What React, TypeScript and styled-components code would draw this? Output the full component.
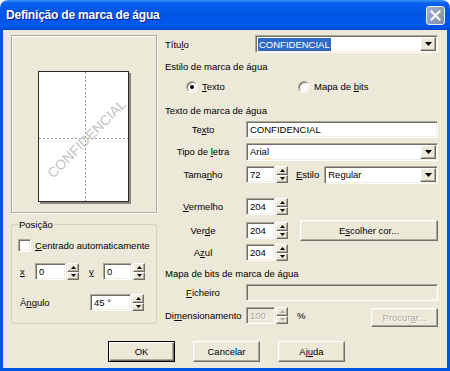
import React from "react";
import styled, { createGlobalStyle, css } from "styled-components";

const C = {
  face: "#ECE9D8",
  light: "#F1EFE2",
  hi: "#FFFFFF",
  shadow: "#ACA899",
  dk: "#716F64",
  blue: "#0054E3",
};

const Global = createGlobalStyle`
  html, body { margin: 0; padding: 0; background: #fff; }
  body { font-family: "Liberation Sans", Arial, sans-serif; }
  #root { width: 450px; height: 371px; }
  * { box-sizing: border-box; }
`;

const sunken = css`
  border: 1px solid;
  border-color: ${C.shadow} ${C.hi} ${C.hi} ${C.shadow};
  box-shadow: inset 1px 1px ${C.dk}, inset -1px -1px ${C.light};
`;

const raised = css`
  border: 1px solid;
  border-color: ${C.hi} ${C.dk} ${C.dk} ${C.hi};
  box-shadow: inset -1px -1px ${C.shadow}, inset 1px 1px ${C.light};
`;

const disabledText = css`
  color: ${C.shadow};
  text-shadow: 1px 1px ${C.hi};
`;

const Window = styled.div`
  width: 450px;
  height: 371px;
  display: flex;
  flex-direction: column;
  border-radius: 8px 8px 0 0;
  overflow: hidden;
  font-size: 9.5px;
  line-height: 13px;
  color: #000;
`;

const TitleBar = styled.div`
  height: 30px;
  flex: none;
  display: flex;
  align-items: center;
  justify-content: space-between;
  padding: 0 5px 0 6px;
  background: linear-gradient(
    180deg,
    #3d95ff 0%,
    #0a5fee 10%,
    #0054e3 45%,
    #0058ee 85%,
    #0050e0 94%,
    #0043cf 100%
  );
`;

const TitleText = styled.span`
  color: #fff;
  font-weight: bold;
  font-size: 12px;
  letter-spacing: -0.2px;
  text-shadow: 1px 1px #0a1d8a;
`;

const CloseBtn = styled.div`
  width: 19px;
  height: 19px;
  border: 1px solid #e8ecf4;
  border-radius: 3px;
  background: linear-gradient(135deg, #a9b3c8 0%, #8e9bb6 60%, #7f8daa 100%);
  display: flex;
  align-items: center;
  justify-content: center;
`;

const Body = styled.div`
  flex: 1;
  background: ${C.face};
  border: 3px solid ${C.blue};
  border-top: none;
  display: flex;
  flex-direction: column;
  padding: 5px 10px 6px 8px;
`;

const Main = styled.div`
  display: flex;
  gap: 8px;
`;

const LeftCol = styled.div`
  width: 146px;
  flex: none;
  display: flex;
  flex-direction: column;
`;

const RightCol = styled.div`
  flex: 1;
  display: flex;
  flex-direction: column;
`;

const PreviewFrame = styled.div`
  height: 178px;
  border: 1px solid ${C.shadow};
  box-shadow: inset 1px 1px ${C.hi}, 1px 1px ${C.hi};
  display: flex;
  justify-content: center;
  padding-top: 35px;
  padding-left: 1px;
`;

const Group = styled.fieldset`
  margin: 5px 0 0 0;
  padding: 0 6px 12px 6px;
  border: 1px solid #d0d0bf;
  border-radius: 3px;
  min-width: 0;
`;

const Legend = styled.legend`
  padding: 0 1px;
  margin-left: 0;
  line-height: 13px;
`;

const GroupRow = styled.div<{ $mt: number }>`
  display: flex;
  align-items: center;
  height: 17px;
  margin-top: ${(p) => p.$mt}px;
`;

const CheckBox = styled.span`
  width: 13px;
  height: 13px;
  flex: none;
  background: #fff;
  ${sunken};
  margin-right: 4px;
`;

const SmallLabel = styled.span<{ $w: number; $ml?: number }>`
  width: ${(p) => p.$w}px;
  margin-left: ${(p) => p.$ml ?? 0}px;
  padding-left: 2px;
  flex: none;
  white-space: nowrap;
`;

const SectionLabel = styled.div<{ $mt: number }>`
  height: 13px;
  margin-top: ${(p) => p.$mt}px;
  white-space: nowrap;
`;

const FieldRow = styled.div<{ $mt: number; $h?: number }>`
  display: flex;
  align-items: center;
  height: ${(p) => p.$h ?? 17}px;
  margin-top: ${(p) => p.$mt}px;
  flex: none;
`;

const FieldLabel = styled.span`
  width: 76px;
  margin-right: 5px;
  flex: none;
  text-align: center;
  white-space: nowrap;
`;

const TitleLabel = styled.span`
  width: 90px;
  flex: none;
`;

const TextBox = styled.div<{ $w?: number; $disabled?: boolean }>`
  height: 17px;
  ${(p) => (p.$w ? `width: ${p.$w}px; flex: none;` : "flex: 1;")}
  ${sunken};
  background: ${(p) => (p.$disabled ? C.face : "#fff")};
  padding: 0 3px;
  display: flex;
  align-items: center;
  white-space: nowrap;
  overflow: hidden;
  ${(p) => p.$disabled && disabledText};
`;

const ComboBox = styled.div<{ $ml?: number }>`
  height: 18px;
  flex: 1;
  margin-left: ${(p) => p.$ml ?? 0}px;
  ${sunken};
  background: #fff;
  display: flex;
  align-items: center;
  padding: 1px 1px 1px 2px;
`;

const ComboValue = styled.span<{ $selected?: boolean }>`
  flex: 1;
  white-space: nowrap;
  padding-left: 1px;
  ${(p) =>
    p.$selected &&
    css`
      flex: none;
      margin-right: auto;
      background: #316ac5;
      color: #fff;
      padding: 0 1px;
    `}
`;

const DropBtn = styled.span`
  width: 16px;
  height: 14px;
  flex: none;
  background: ${C.face};
  ${raised};
  display: flex;
  align-items: center;
  justify-content: center;
`;

const SpinWrap = styled.div`
  display: flex;
  height: 17px;
  flex: none;
  gap: 1px;
`;

const SpinCol = styled.div`
  width: 12px;
  display: flex;
  flex-direction: column;
`;

const SpinHalf = styled.span`
  flex: 1;
  background: ${C.face};
  ${raised};
  display: flex;
  align-items: center;
  justify-content: center;
`;

const Radio = styled.span<{ $on?: boolean }>`
  width: 12px;
  height: 12px;
  border-radius: 50%;
  flex: none;
  background: #fff;
  ${sunken};
  display: flex;
  align-items: center;
  justify-content: center;
  margin-right: 4px;
  &::after {
    content: "";
    width: 4px;
    height: 4px;
    border-radius: 50%;
    background: ${(p) => (p.$on ? "#000" : "transparent")};
  }
`;

const RadioItem = styled.label<{ $w?: number }>`
  display: flex;
  align-items: center;
  ${(p) => (p.$w ? `width: ${p.$w}px;` : "")}
  flex: none;
`;

const RadioRow = styled.div`
  display: flex;
  height: 13px;
  margin-top: 7px;
  padding-left: 21px;
`;

const Btn = styled.button<{ $w?: number; $h?: number; $default?: boolean; $ml?: number; $mt?: number }>`
  width: ${(p) => p.$w ?? 67}px;
  height: ${(p) => p.$h ?? 21}px;
  margin-left: ${(p) => (p.$ml === undefined ? "0" : p.$ml < 0 ? "auto" : p.$ml + "px")};
  margin-top: ${(p) => p.$mt ?? 0}px;
  flex: none;
  padding: 0;
  font: inherit;
  color: #000;
  background: ${C.face};
  ${raised};
  ${(p) =>
    p.$default &&
    css`
      border: 1px solid #000;
      box-shadow: inset 1px 1px ${C.hi}, inset -1px -1px ${C.dk}, inset -2px -2px ${C.shadow};
    `}
  &:disabled {
    ${disabledText};
  }
`;

const Percent = styled.span`
  margin-left: 9px;
`;

const EstiloLabel = styled.span`
  margin-left: 8px;
  flex: none;
`;

const ButtonBar = styled.div`
  margin-top: auto;
  display: flex;
  gap: 18px;
  padding-left: 97px;
`;

const Arrow = ({ dir, disabled }: { dir: "up" | "down"; disabled?: boolean }) => (
  <svg width="5" height="3" viewBox="0 0 5 3">
    <polygon
      points={dir === "up" ? "2.5,0 5,3 0,3" : "0,0 5,0 2.5,3"}
      fill={disabled ? C.shadow : "#000"}
    />
  </svg>
);

const Spin = ({ value, w, disabled }: { value: string; w: number; disabled?: boolean }) => (
  <SpinWrap>
    <TextBox $w={w} $disabled={disabled}>
      {value}
    </TextBox>
    <SpinCol>
      <SpinHalf>
        <Arrow dir="up" disabled={disabled} />
      </SpinHalf>
      <SpinHalf>
        <Arrow dir="down" disabled={disabled} />
      </SpinHalf>
    </SpinCol>
  </SpinWrap>
);

const Combo = ({ value, selected, ml }: { value: string; selected?: boolean; ml?: number }) => (
  <ComboBox $ml={ml}>
    <ComboValue $selected={selected}>{value}</ComboValue>
    <DropBtn>
      <svg width="7" height="4" viewBox="0 0 7 4">
        <polygon points="0,0 7,0 3.5,4" fill="#000" />
      </svg>
    </DropBtn>
  </ComboBox>
);

const PaperPreview = () => (
  <svg width="94" height="134" viewBox="0 0 94 134">
    <rect x="2" y="2" width="91" height="131" fill="#8c8a80" />
    <rect x="0.5" y="0.5" width="90" height="130" fill="#fff" stroke="#2b2b2b" />
    <line x1="47.5" y1="1" x2="47.5" y2="130" stroke="#9d998b" strokeDasharray="2 2" />
    <line x1="1" y1="67.5" x2="90" y2="67.5" stroke="#9d998b" strokeDasharray="2 2" />
    <text
      x="48.5"
      y="67.5"
      transform="rotate(-45 48.5 67.5)"
      textAnchor="middle"
      dominantBaseline="central"
      fontFamily="Liberation Sans, Arial, sans-serif"
      fontSize="14"
      fill="#c4c4c4"
    >
      CONFIDENCIAL
    </text>
  </svg>
);

export default function App() {
  return (
    <>
      <Global />
      <Window>
        <TitleBar>
          <TitleText>Definição de marca de água</TitleText>
          <CloseBtn>
            <svg width="11" height="11" viewBox="0 0 11 11">
              <path d="M1.5 1.5 L9.5 9.5 M9.5 1.5 L1.5 9.5" stroke="#fff" strokeWidth="2" strokeLinecap="square" />
            </svg>
          </CloseBtn>
        </TitleBar>
        <Body>
          <Main>
            <LeftCol>
              <PreviewFrame>
                <PaperPreview />
              </PreviewFrame>
              <Group>
                <Legend>Posição</Legend>
                <GroupRow $mt={6}>
                  <CheckBox />
                  <span>
                    <u>C</u>entrado automaticamente
                  </span>
                </GroupRow>
                <GroupRow $mt={9}>
                  <SmallLabel $w={17}>
                    <u>x</u>
                  </SmallLabel>
                  <Spin value="0" w={31} />
                  <SmallLabel $w={16} $ml={8}>
                    <u>y</u>
                  </SmallLabel>
                  <Spin value="0" w={29} />
                </GroupRow>
                <GroupRow $mt={14}>
                  <SmallLabel $w={72}>
                    Â<u>n</u>gulo
                  </SmallLabel>
                  <Spin value="45 °" w={41} />
                </GroupRow>
              </Group>
            </LeftCol>
            <RightCol>
              <FieldRow $mt={0} $h={18}>
                <TitleLabel>
                  Títu<u>l</u>o
                </TitleLabel>
                <Combo value="CONFIDENCIAL" selected />
              </FieldRow>
              <SectionLabel $mt={7}>Estilo de marca de água</SectionLabel>
              <RadioRow>
                <RadioItem $w={112}>
                  <Radio $on />
                  <span>
                    <u>T</u>exto
                  </span>
                </RadioItem>
                <RadioItem>
                  <Radio />
                  <span>
                    Mapa de <u>b</u>its
                  </span>
                </RadioItem>
              </RadioRow>
              <SectionLabel $mt={11}>Texto de marca de água</SectionLabel>
              <FieldRow $mt={4}>
                <FieldLabel>
                  Te<u>x</u>to
                </FieldLabel>
                <TextBox>CONFIDENCIAL</TextBox>
              </FieldRow>
              <FieldRow $mt={5}>
                <FieldLabel>
                  Tipo de <u>l</u>etra
                </FieldLabel>
                <Combo value="Arial" />
              </FieldRow>
              <FieldRow $mt={6}>
                <FieldLabel>
                  Tama<u>n</u>ho
                </FieldLabel>
                <Spin value="72" w={29} />
                <EstiloLabel>
                  <u>E</u>stilo
                </EstiloLabel>
                <Combo value="Regular" ml={5} />
              </FieldRow>
              <FieldRow $mt={15}>
                <FieldLabel>
                  <u>V</u>ermelho
                </FieldLabel>
                <Spin value="204" w={29} />
              </FieldRow>
              <FieldRow $mt={7}>
                <FieldLabel>
                  Ver<u>d</u>e
                </FieldLabel>
                <Spin value="204" w={29} />
                <Btn $w={138} $ml={12}>
                  E<u>s</u>colher cor...
                </Btn>
              </FieldRow>
              <FieldRow $mt={5}>
                <FieldLabel>
                  A<u>z</u>ul
                </FieldLabel>
                <Spin value="204" w={29} />
              </FieldRow>
              <SectionLabel $mt={6}>Mapa de bits de marca de água</SectionLabel>
              <FieldRow $mt={4}>
                <FieldLabel>
                  <u>F</u>icheiro
                </FieldLabel>
                <TextBox $disabled />
              </FieldRow>
              <FieldRow $mt={6}>
                <FieldLabel>
                  Di<u>m</u>ensionamento
                </FieldLabel>
                <Spin value="100" w={29} disabled />
                <Percent>%</Percent>
                <Btn $w={67} $h={19} $ml={-1} $mt={4} disabled>
                  Procur<u>a</u>r...
                </Btn>
              </FieldRow>
            </RightCol>
          </Main>
          <ButtonBar>
            <Btn $default>OK</Btn>
            <Btn>Cancelar</Btn>
            <Btn>
              Aj<u>u</u>da
            </Btn>
          </ButtonBar>
        </Body>
      </Window>
    </>
  );
}
